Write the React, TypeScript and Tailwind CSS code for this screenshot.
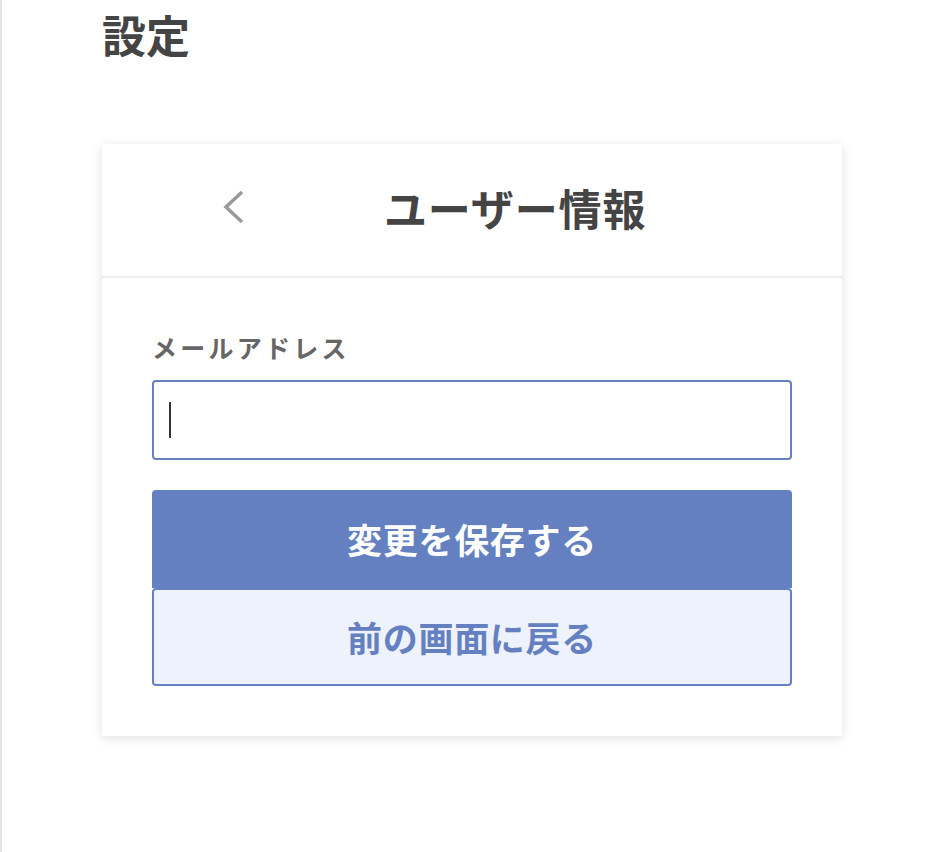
export default function App() {
  return (
    <div
      className="min-h-[852px] w-[934px] bg-white border-l-2 border-[#e3e3e3]"
      style={{ fontFamily: '"Noto Sans CJK JP", "Noto Sans", sans-serif' }}
    >
      <div className="pl-[100px] pt-[6px]">
        <h1 className="text-[44px] leading-[56px] font-bold text-[#444]">設定</h1>

        {/* Card */}
        <div className="mt-[82px] w-[740px] bg-white shadow-[0_2px_10px_rgba(0,0,0,0.12)]">
          {/* Header */}
          <div className="h-[134px] flex items-center border-b-2 border-[#eeeeee]">
            <button className="ml-[120px] mb-[6px] text-[#999]">
              <svg width="24" height="34" viewBox="0 0 24 34" fill="none">
                <polyline points="20,2 4,17 20,32" stroke="currentColor" strokeWidth="3.5" strokeLinejoin="miter" />
              </svg>
            </button>
            <h2 className="ml-[138px] mb-[6px] text-[43px] font-bold text-[#444] tracking-[0.02em]">ユーザー情報</h2>
          </div>

          {/* Body */}
          <div className="px-[50px] pt-[52px] pb-[50px]">
            <label className="block text-[25px] font-bold text-[#666] tracking-[0.13em] leading-[34px]">
              メールアドレス
            </label>
            <div className="mt-[16px] h-[80px] border-2 border-[#6680c1] rounded-[4px] flex items-center px-[15px]">
              <span className="w-[2px] h-[36px] bg-[#333]" />
            </div>
            <div className="mt-[30px] h-[98px] bg-[#6580c0] rounded-t-[4px] flex items-center justify-center text-white text-[35px] font-bold tracking-[0.02em]">
              変更を保存する
            </div>
            <div className="h-[98px] bg-[#edf2fc] border-2 border-[#6680c1] rounded-[4px] flex items-center justify-center text-[#6580c0] text-[35px] font-bold tracking-[0.02em]">
              前の画面に戻る
            </div>
          </div>
        </div>
      </div>
    </div>
  );
}
